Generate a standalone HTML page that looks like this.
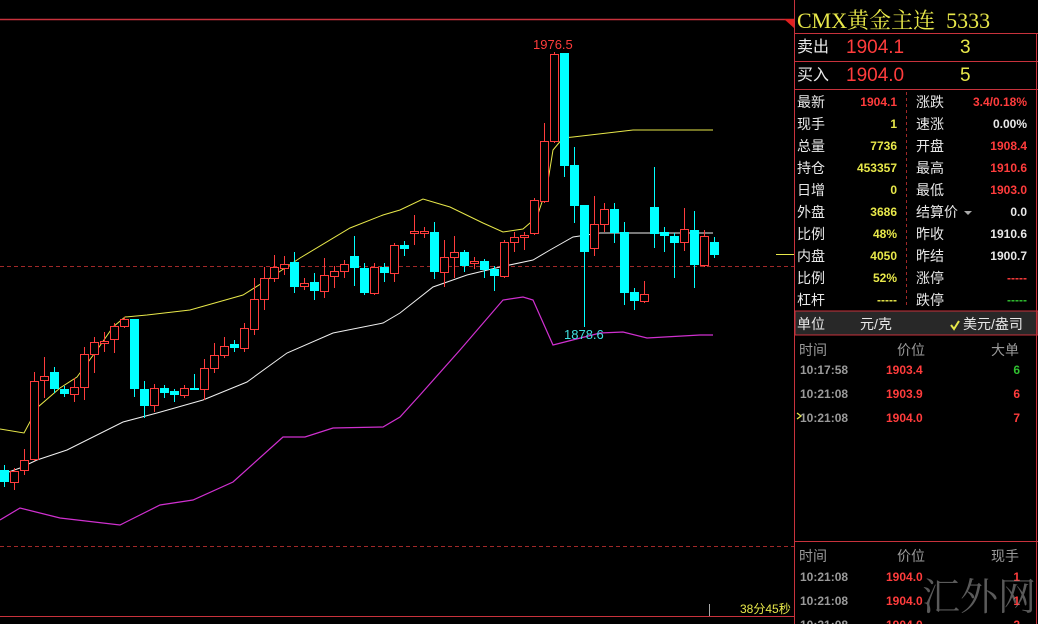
<!DOCTYPE html>
<html><head><meta charset="utf-8"><style>
html,body{margin:0;padding:0;background:#000;width:1038px;height:624px;overflow:hidden;}
body{position:relative;font-family:"Liberation Sans","Noto Sans CJK SC",sans-serif;}
.t{position:absolute;white-space:nowrap;}
.w{color:#e8e8e8}.y{color:#e8e84a}.r{color:#ff3c3c}.g{color:#9a9a9a}
.b{font-weight:bold}
</style></head><body>
<svg width="1038" height="624" style="position:absolute;left:0;top:0" xmlns="http://www.w3.org/2000/svg">
<line x1="0" y1="19.5" x2="794" y2="19.5" stroke="#c8323c" stroke-width="1.5"/>
<polygon points="784,19 794,19 794,28" fill="#e02020"/>
<line x1="0" y1="266.5" x2="794" y2="266.5" stroke="#a02828" stroke-dasharray="4,3"/>
<line x1="0" y1="546.5" x2="794" y2="546.5" stroke="#a02828" stroke-dasharray="4,3"/>
<line x1="0" y1="616.5" x2="794" y2="616.5" stroke="#c8323c"/>
<line x1="709.5" y1="604" x2="709.5" y2="616" stroke="#aaa"/>
<line x1="776" y1="254.5" x2="794" y2="254.5" stroke="#e8e84a"/>
<polyline fill="none" stroke="#e8e84a" stroke-width="1" points="0,429 24,433 38,407 60,388 77,377 97,350 113,327 125,317 147,315 190,310 243,295 267,280 300,258 350,228 383,215 400,210 423,199 450,207 483,223 503,232 523,229 537,217 547,187 553,150 563,138 573,137 633,130 713,130"/>
<polyline fill="none" stroke="#f0f0f0" stroke-width="1" points="0,475 20,468 37,460 67,450 123,422 157,413 203,400 247,382 287,353 333,333 383,323 400,313 433,287 467,275 500,267 533,260 550,250 573,237 600,233 713,233"/>
<polyline fill="none" stroke="#d030d0" stroke-width="1.2" points="0,520 20,508 60,518 120,525 160,505 193,500 233,482 283,437 305,437 333,428 383,427 400,417 420,395 460,350 503,300 523,297 533,300 553,345 600,333 623,332 647,338 700,335 713,335"/>
<g id="c"></g>
<line x1="794.5" y1="0" x2="794.5" y2="624" stroke="#c8323c"/>
<line x1="795" y1="33.5" x2="1038" y2="33.5" stroke="#c8323c"/>
<line x1="795" y1="61.5" x2="1038" y2="61.5" stroke="#c8323c"/>
<line x1="795" y1="89.5" x2="1038" y2="89.5" stroke="#c8323c"/>
<line x1="906.5" y1="92" x2="906.5" y2="308" stroke="#a02828" stroke-dasharray="3,3"/>
<rect x="795" y="311" width="243" height="24" fill="#282828" stroke="#c8323c"/>
<line x1="795" y1="541.5" x2="1038" y2="541.5" stroke="#c8323c"/>
<line x1="1036.5" y1="33" x2="1036.5" y2="624" stroke="#c8323c"/>
<polyline points="964,211 968,215 972,211" fill="#aaa"/>
<polyline points="951,325 954,329 959,321" fill="none" stroke="#e8e84a" stroke-width="2"/>
<polyline points="797,413 801,416 797,419" fill="none" stroke="#e8e84a" stroke-width="1.3"/>
</svg>
<script>
var R=[[0,'c',470,482,465,487],[10,'r',471,482,468,490],[20,'r',460,470,449,475],[30,'r',381,459,372,461],[40,'r',376,380,357,398],[50,'c',372,389,367,393],[60,'c',389,394,386,397],[70,'r',387,394,378,402],[80,'r',354,387,347,400],[90,'r',342,354,337,373],[100,'r',341,343,332,352],[110,'r',326,339,323,353],[120,'r',319,326,317,328],[130,'c',319,389,319,397],[140,'c',389,406,381,418],[150,'r',388,405,384,412],[160,'c',388,393,385,398],[170,'c',391,395,389,402],[180,'r',388,395,385,398],[190,'c',388,390,374,390],[200,'r',368,389,359,400],[210,'r',355,368,343,373],[220,'r',346,355,337,358],[230,'c',344,348,340,352],[240,'r',328,348,323,352],[250,'r',299,329,278,335],[260,'r',278,299,267,310],[270,'r',267,278,255,282],[280,'r',264,268,256,275],[290,'c',262,287,252,293],[300,'r',283,286,278,290],[310,'c',282,291,273,300],[320,'r',275,291,258,298],[330,'r',271,276,266,288],[340,'r',264,271,260,278],[350,'c',256,268,236,286],[360,'c',268,293,263,295],[370,'r',267,293,263,295],[380,'c',267,273,263,282],[390,'r',245,273,243,282],[400,'c',245,249,241,256],[410,'r',231,233,215,245],[420,'r',231,233,227,238],[430,'c',232,272,222,279],[440,'r',257,272,240,287],[450,'r',252,257,236,278],[460,'c',252,266,250,272],[470,'r',261,263,257,269],[480,'c',261,270,259,278],[490,'c',269,276,266,291],[500,'r',242,276,240,278],[510,'r',237,242,232,252],[520,'r',235,237,232,250],[530,'r',200,233,198,235],[540,'r',141,201,123,203],[550,'r',54,141,52,143],[560,'c',53,166,53,177],[570,'c',165,206,147,223],[580,'c',205,252,205,327],[590,'r',224,248,196,256],[600,'r',209,224,203,232],[610,'c',209,233,203,243],[620,'c',232,293,222,305],[630,'c',292,301,288,310],[640,'r',294,301,281,303],[650,'c',207,234,167,248],[660,'c',232,236,227,252],[670,'c',236,243,233,278],[680,'r',229,242,208,251],[690,'c',230,265,211,288],[700,'r',236,265,230,267],[710,'c',242,255,237,258]];
var s='';R.forEach(function(a){var x=a[0],col=a[1]=='r'?'#ff3c3c':'#00ffff',cx=x+4.5;
s+='<line x1="'+cx+'" y1="'+a[4]+'" x2="'+cx+'" y2="'+a[5]+'" stroke="'+col+'"/>';
var h=Math.max(1,a[3]-a[2]);
if(a[1]=='r')s+='<rect x="'+(x+0.5)+'" y="'+(a[2]+0.5)+'" width="8" height="'+h+'" fill="#000" stroke="'+col+'"/>';
else s+='<rect x="'+x+'" y="'+a[2]+'" width="9" height="'+h+'" fill="'+col+'"/>';});
document.getElementById('c').innerHTML=s;
</script>
<div class="t r" style="left:533px;top:37px;font-size:13px">1976.5</div>
<div class="t" style="left:564px;top:327px;font-size:13px;color:#40e0e0">1878.6</div>
<div class="t y" style="left:740px;top:600px;font-size:12px">38分45秒</div>

<div class="t y" style="left:797px;top:4px;font-size:22px;font-family:'Liberation Serif','Noto Serif CJK SC',serif">CMX黄金主连&nbsp;&nbsp;5333</div>
<div class="t w" style="left:797px;top:34px;font-size:16px;line-height:28px">卖出</div>
<div class="t r" style="left:846px;top:34px;font-size:19px;line-height:28px">1904.1</div>
<div class="t y" style="left:960px;top:34px;font-size:19px;line-height:28px">3</div>
<div class="t w" style="left:797px;top:62px;font-size:16px;line-height:28px">买入</div>
<div class="t r" style="left:846px;top:62px;font-size:19px;line-height:28px">1904.0</div>
<div class="t y" style="left:960px;top:62px;font-size:19px;line-height:28px">5</div>

<div style="position:absolute;left:797px;top:91px;width:100px;font-size:14px;line-height:22px" class="w">最新<br>现手<br>总量<br>持仓<br>日增<br>外盘<br>比例<br>内盘<br>比例<br>杠杆</div>
<div style="position:absolute;left:820px;top:91px;width:77px;text-align:right;font-size:12px;line-height:22px;font-weight:bold">
<span class="r">1904.1</span><br><span class="y">1</span><br><span class="y">7736</span><br><span class="y">453357</span><br><span class="y">0</span><br><span class="y">3686</span><br><span class="y">48%</span><br><span class="y">4050</span><br><span class="y">52%</span><br><span class="y">-----</span></div>
<div style="position:absolute;left:916px;top:91px;width:100px;font-size:14px;line-height:22px" class="w">涨跌<br>速涨<br>开盘<br>最高<br>最低<br>结算价<br>昨收<br>昨结<br>涨停<br>跌停</div>
<div style="position:absolute;left:940px;top:91px;width:87px;text-align:right;font-size:12px;line-height:22px;font-weight:bold">
<span class="r">3.4/0.18%</span><br><span class="w">0.00%</span><br><span class="r">1908.4</span><br><span class="r">1910.6</span><br><span class="r">1903.0</span><br><span class="w">0.0</span><br><span class="w">1910.6</span><br><span class="w">1900.7</span><br><span class="r">-----</span><br><span style="color:#30c030">-----</span></div>

<div class="t w" style="left:797px;top:314px;font-size:14px">单位</div>
<div class="t w" style="left:860px;top:314px;font-size:14px">元/克</div>
<div class="t w" style="left:963px;top:314px;font-size:14px">美元/盎司</div>

<div class="t g" style="left:799px;top:340px;font-size:14px">时间</div>
<div class="t g" style="left:897px;top:340px;font-size:14px">价位</div>
<div class="t g" style="left:991px;top:340px;font-size:14px">大单</div>
<div style="position:absolute;left:800px;top:358px;font-size:12px;line-height:24px;font-weight:bold" class="g">10:17:58<br>10:21:08<br>10:21:08</div>
<div style="position:absolute;left:886px;top:358px;font-size:12px;line-height:24px;font-weight:bold" class="r">1903.4<br>1903.9<br>1904.0</div>
<div style="position:absolute;left:990px;top:358px;width:30px;text-align:right;font-size:12px;line-height:24px;font-weight:bold"><span style="color:#30c030">6</span><br><span class="r">6</span><br><span class="r">7</span></div>

<div class="t g" style="left:799px;top:546px;font-size:14px">时间</div>
<div class="t g" style="left:897px;top:546px;font-size:14px">价位</div>
<div class="t g" style="left:991px;top:546px;font-size:14px">现手</div>
<div style="position:absolute;left:800px;top:565px;font-size:12px;line-height:24px;font-weight:bold" class="g">10:21:08<br>10:21:08<br>10:21:08</div>
<div style="position:absolute;left:886px;top:565px;font-size:12px;line-height:24px;font-weight:bold" class="r">1904.0<br>1904.0<br>1904.0</div>
<div style="position:absolute;left:990px;top:565px;width:30px;text-align:right;font-size:12px;line-height:24px;font-weight:bold" class="r">1<br>1<br>2</div>
<div class="t" style="left:922px;top:566px;font-size:38px;color:rgba(150,150,150,0.6);font-family:'Liberation Serif','Noto Serif CJK SC',serif">汇外网</div>
</body></html>
